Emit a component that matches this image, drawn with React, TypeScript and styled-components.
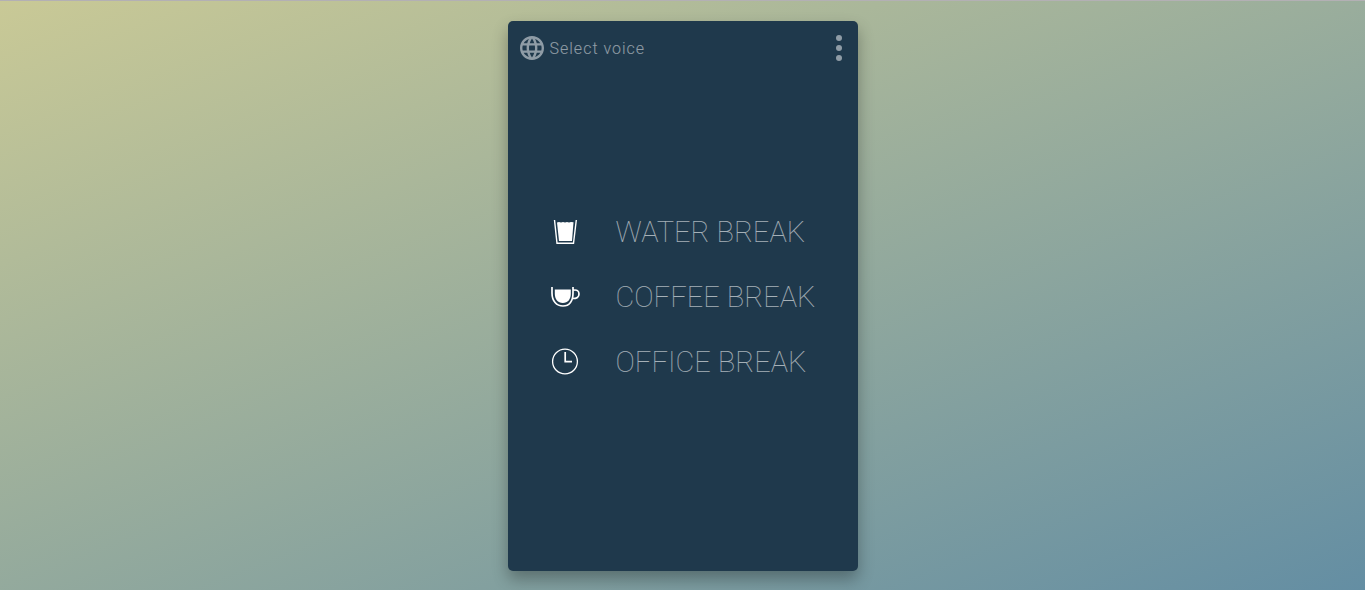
import React from "react";
import styled, { createGlobalStyle } from "styled-components";

const GlobalStyle = createGlobalStyle`
  * { box-sizing: border-box; }
  body { margin: 0; font-family: Roboto, "Liberation Sans", sans-serif; }
`;

const Page = styled.main`
  min-height: 100vh;
  display: flex;
  justify-content: center;
  align-items: flex-start;
  padding: 20px 16px 18px;
  border-top: 1px solid #b3b0b4;
  background: linear-gradient(159deg, #c9c996 0%, #648ea3 100%) border-box;
`;

const Card = styled.section`
  width: 100%;
  max-width: 350px;
  min-height: 550px;
  display: flex;
  flex-direction: column;
  border-radius: 5px;
  background: #1f394c;
  box-shadow: 0 8px 16px rgba(0, 0, 0, 0.3);
`;

const TopBar = styled.header`
  display: flex;
  justify-content: space-between;
  align-items: center;
  height: 54px;
  padding: 0 12px;
`;

const PlainButton = styled.button`
  display: flex;
  align-items: center;
  gap: 6px;
  padding: 0;
  border: 0;
  background: none;
  color: #fff;
  opacity: 0.5;
  font: 300 16px/25px Roboto, "Liberation Sans", sans-serif;
  letter-spacing: 1px;
  cursor: pointer;
`;

const BreakList = styled.nav`
  flex: 1;
  display: flex;
  flex-direction: column;
  justify-content: center;
  gap: 29px;
  padding: 0 42px 53px;
`;

const BreakButton = styled.button`
  display: flex;
  align-items: center;
  gap: 36px;
  padding: 0;
  border: 0;
  background: none;
  color: #fff;
  font: 100 29px/36px Roboto, "Liberation Sans", sans-serif;
  white-space: nowrap;
  cursor: pointer;
`;

const BreakLabel = styled.span`
  opacity: 0.6;
`;

const BreakIcon = styled.svg`
  flex: none;
  width: 30px;
  height: 30px;
`;

export default function App() {
  return (
    <>
      <GlobalStyle />
      <Page>
        <Card>
          <TopBar>
            <PlainButton type="button">
              <svg width="24" height="24" viewBox="2 2 20 20" fill="currentColor" aria-hidden="true">
                <path d="M11.99 2C6.47 2 2 6.48 2 12s4.47 10 9.99 10C17.52 22 22 17.52 22 12S17.52 2 11.99 2zm6.93 6h-2.95c-.32-1.25-.78-2.45-1.38-3.56 1.84.63 3.37 1.91 4.33 3.56zM12 4.04c.83 1.2 1.48 2.53 1.91 3.96h-3.82c.43-1.43 1.08-2.76 1.91-3.96zM4.26 14C4.1 13.36 4 12.69 4 12s.1-1.36.26-2h3.38c-.08.66-.14 1.32-.14 2s.06 1.34.14 2H4.26zm.82 2h2.95c.32 1.25.78 2.45 1.38 3.56-1.84-.63-3.37-1.9-4.33-3.56zm2.95-8H5.08c.96-1.66 2.49-2.93 4.33-3.56C8.81 5.55 8.35 6.75 8.03 8zM12 19.96c-.83-1.2-1.48-2.53-1.91-3.96h3.82c-.43 1.43-1.08 2.76-1.91 3.96zM14.34 14H9.66c-.09-.66-.16-1.32-.16-2s.07-1.35.16-2h4.68c.09.65.16 1.32.16 2s-.07 1.34-.16 2zm.25 5.56c.6-1.11 1.06-2.31 1.38-3.56h2.95c-.96 1.65-2.49 2.93-4.33 3.56zM16.36 14c.08-.66.14-1.32.14-2s-.06-1.34-.14-2h3.38c.16.64.26 1.31.26 2s-.1 1.36-.26 2h-3.38z" />
              </svg>
              Select voice
            </PlainButton>
            <PlainButton type="button" aria-label="Menu">
              <svg width="14" height="28" viewBox="0 0 14 28" fill="currentColor" aria-hidden="true">
                <circle cx="7" cy="4" r="3" />
                <circle cx="7" cy="14" r="3" />
                <circle cx="7" cy="24" r="3" />
              </svg>
            </PlainButton>
          </TopBar>
          <BreakList aria-label="Breaks">
            <BreakButton type="button">
              <BreakIcon viewBox="0 0 30 30" aria-hidden="true">
                <path d="M4.500 3L7 26.300h16.500L26.300 3" fill="none" stroke="currentColor" strokeWidth="1.400" />
                <path d="M7 5.500l2-.6 2 .6 2-.6 2 .6 2-.6 2 .6 2-.6 2.500.3L22 24H9z" fill="currentColor" />
              </BreakIcon>
              <BreakLabel>WATER BREAK</BreakLabel>
            </BreakButton>
            <BreakButton type="button">
              <BreakIcon viewBox="0 0 30 30" aria-hidden="true">
                <path d="M2 5V11c0 8 4.500 13 11 13s10-5 10-13V5M23 8.300c4-1 6 .7 6 3.700s-2 4.700-7 4.500" fill="none" stroke="currentColor" strokeWidth="1.700" />
                <path d="M4.800 7.500h16V12c0 5-3 9-8 9s-8-4-8-9z" fill="currentColor" />
              </BreakIcon>
              <BreakLabel>COFFEE BREAK</BreakLabel>
            </BreakButton>
            <BreakButton type="button">
              <BreakIcon viewBox="0 0 30 30" fill="none" stroke="currentColor" aria-hidden="true">
                <circle cx="15" cy="14.500" r="12.400" strokeWidth="1.300" />
                <path d="M15.200 5v9.700h6.800" strokeWidth="1.700" />
              </BreakIcon>
              <BreakLabel>OFFICE BREAK</BreakLabel>
            </BreakButton>
          </BreakList>
        </Card>
      </Page>
    </>
  );
}
